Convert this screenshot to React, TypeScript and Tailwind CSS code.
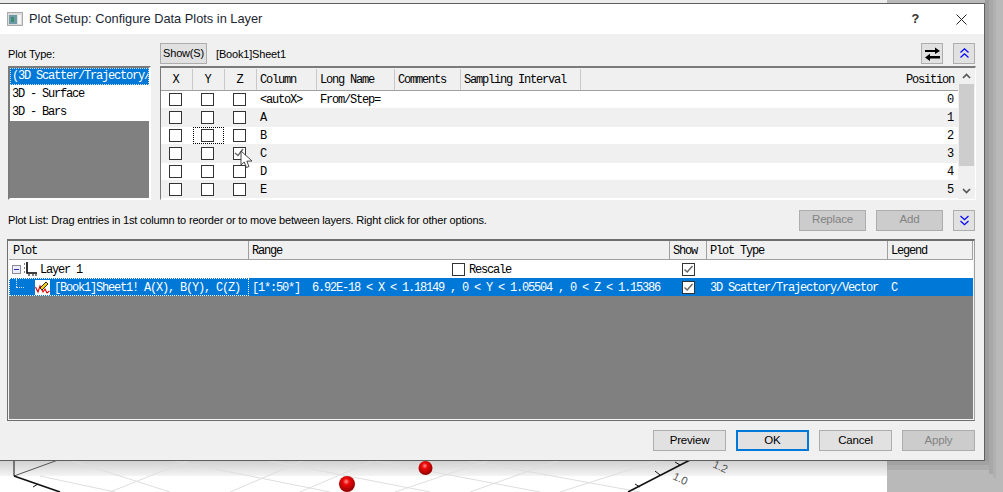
import React from 'react';

const mono = "font-['Liberation_Mono',monospace] text-[12px] tracking-[-1.2px]";

const Check = ({ checked = false }: { checked?: boolean }) => (
  <span className="inline-flex h-[13px] w-[13px] items-center justify-center border border-[#333] bg-white">
    {checked && (
      <svg width="11" height="11" viewBox="0 0 11 11" fill="none" stroke="#666" strokeWidth="1.4">
        <path d="M1.5 5.5 L4.2 8 L9.5 2" />
      </svg>
    )}
  </span>
);

const Chevrons = ({ up }: { up?: boolean }) => (
  <svg width="9" height="11" viewBox="0 0 9 11" fill="none" stroke="#0000ff" strokeWidth="1.2">
    {up ? <path d="M0.5 4.5 L4.5 0.8 L8.5 4.5 M0.5 9.5 L4.5 5.8 L8.5 9.5" /> : <path d="M0.5 1 L4.5 4.7 L8.5 1 M0.5 6 L4.5 9.7 L8.5 6" />}
  </svg>
);

const Btn = ({ children, disabled, primary }: { children: React.ReactNode; disabled?: boolean; primary?: boolean }) => (
  <div
    className={`flex h-[21px] w-[73px] items-center justify-center text-[11.5px] ${
      disabled ? 'border border-[#adadad] bg-[#cccccc] text-[#838383]' : primary ? 'border-2 border-[#0078d7] bg-[#e1e1e1] text-black' : 'border border-[#adadad] bg-[#e1e1e1] text-black'
    }`}
  >
    {children}
  </div>
);

const gridCols = [
  { name: 'X', w: 'w-[32px] justify-center pr-[2px]' },
  { name: 'Y', w: 'w-[32px] justify-center pr-[2px]' },
  { name: 'Z', w: 'w-[32px] justify-center pr-[2px]' },
  { name: 'Column', w: 'w-[60px] pl-[3px]' },
  { name: 'Long Name', w: 'w-[78px] pl-[3px]' },
  { name: 'Comments', w: 'w-[66px] pl-[3px]' },
  { name: 'Sampling Interval', w: 'w-[120px] pl-[3px]' },
];

const gridRows = [
  { col: '<autoX>', long: 'From/Step=', pos: 0, row: 'h-[17px] pt-[1px] bg-white' },
  { col: 'A', long: '', pos: 1, row: 'h-[19px] pt-[2px] bg-[#f0f0f0]' },
  { col: 'B', long: '', pos: 2, row: 'h-[17px] pt-[1px] bg-white' },
  { col: 'C', long: '', pos: 3, row: 'h-[19px] pt-[2px] bg-[#f0f0f0]' },
  { col: 'D', long: '', pos: 4, row: 'h-[17px] pt-[1px] bg-white' },
  { col: 'E', long: '', pos: 5, row: 'h-[18px] pt-[2px] bg-[#f0f0f0]' },
];

const listHead = [
  { name: 'Plot', w: 'w-[240px] pl-[4px]' },
  { name: 'Range', w: 'w-[421px] pl-[3px]' },
  { name: 'Show', w: 'w-[37px] pl-[3px]' },
  { name: 'Plot Type', w: 'w-[181px] pl-[3px]' },
  { name: 'Legend', w: 'w-[85px] pl-[3px]' },
];

const Backdrop = () => (
  <div className="absolute inset-0 overflow-hidden">
    <div className="absolute left-[887px] top-0 h-full w-[116px] bg-[#b9b9b9]" />
    <div className="absolute left-[985px] top-0 h-[470px] w-[4px] bg-[#9c9c9c]" />
    <div className="absolute left-[989px] top-0 h-[474px] w-[4px] bg-[#a8a8a8]" />
    <div className="absolute left-[993px] top-0 h-[478px] w-[3px] bg-[#b0b0b0]" />
    <div className="absolute left-[887px] top-[461px] h-[4px] w-[102px] bg-[#a2a2a2]" />
    <div className="absolute left-[887px] top-[465px] h-[5px] w-[102px] bg-[#adadad]" />
    <div className="absolute left-0 top-0 h-[3px] w-[887px] bg-[#ececec]" />
    <div className="absolute left-0 top-[460px] h-[16px] w-[887px] bg-gradient-to-b from-[#cfcfcf] to-[#f4f4f4]" />
    <svg className="absolute left-0 top-[460px]" width="887" height="32" viewBox="0 0 887 32" fill="none">
      <path d="M40 16 L115 32 M110 32 L190 0 M70 0 L170 32 M230 32 L305 0 M170 0 L330 32 M300 32 L375 0 M265 0 L430 32 M395 32 L490 0 M370 0 L540 32 M470 32 L560 0 M465 0 L640 32 M560 32 L660 0" stroke="#dedede" />
      <path d="M14 0 V16" stroke="#111" />
      <path d="M14 16 L58 0" stroke="#555" />
      <path d="M14 16 L60 32" stroke="#111" strokeWidth="1.6" />
      <path d="M33 27 L38 24" stroke="#111" />
      <path d="M690 0 L628 32" stroke="#111" strokeWidth="1.6" />
      <path d="M680 5 L675 2 M660 15 L655 11 M640 27 L635 24" stroke="#111" />
      <text x="712" y="7" fontSize="11" fill="#555" transform="rotate(25 712 7)" fontFamily="Liberation Sans">1.2</text>
      <text x="672" y="19" fontSize="11" fill="#555" transform="rotate(25 672 19)" fontFamily="Liberation Sans">1.0</text>
      <defs>
        <radialGradient id="ball" cx="45%" cy="35%" r="65%">
          <stop offset="0" stopColor="#ff9a9a" />
          <stop offset="0.3" stopColor="#ee0a0a" />
          <stop offset="1" stopColor="#8e0000" />
        </radialGradient>
      </defs>
      <circle cx="347" cy="24" r="8" fill="url(#ball)" />
      <circle cx="425.5" cy="8" r="7" fill="url(#ball)" />
    </svg>
  </div>
);

export default function App() {
  return (
    <div className="relative h-[492px] w-[1003px] overflow-hidden bg-white font-['Liberation_Sans',sans-serif] text-[11px] tracking-[-0.18px] text-black">
      <Backdrop />
      <div className="relative mt-[3px] flex h-[458px] w-[985px] flex-col border-r border-b border-t border-[#5f5f5f] bg-[#f0f0f0]">
        {/* title bar */}
        <div className="flex h-[30px] items-center bg-white pl-[7px] pr-[17px]">
          <svg width="16" height="14" viewBox="0 0 16 14">
            <rect x="0.5" y="0.5" width="15" height="13" fill="#dcdcdc" stroke="#aaa" />
            <rect x="2" y="3" width="8" height="9" fill="#6f9aa8" />
            <rect x="4" y="5" width="3" height="5" fill="#3f8a6c" />
            <rect x="11" y="3" width="3" height="9" fill="#f5f5f5" />
          </svg>
          <span className="ml-[6px] text-[12.8px] tracking-normal text-[#1b2733]">Plot Setup: Configure Data Plots in Layer</span>
          <span className="ml-auto mr-[37px] font-['Liberation_Mono',monospace] text-[13px] font-bold leading-none text-[#333]">?</span>
          <svg width="11" height="11" viewBox="0 0 11 11" stroke="#222" strokeWidth="1" fill="none">
            <path d="M0.5 0.5 L10.5 10.5 M10.5 0.5 L0.5 10.5" />
          </svg>
        </div>

        {/* upper section */}
        <div className="flex pl-[8px]">
          <div className="flex w-[143px] flex-col">
            <div className="flex h-[32px] items-end pb-[4px]">Plot Type:</div>
            <div className="flex h-[134px] flex-col border-2 border-[#7a7a7a] border-r-white border-b-white bg-[#808080]">
              <div className={`flex h-[17px] items-center overflow-hidden whitespace-nowrap border border-dotted border-[#cde] bg-[#0078d7] pb-[1px] pl-px text-white ${mono}`}>(3D Scatter/Trajectory/</div>
              <div className={`flex h-[18px] items-center bg-white pl-[2px] ${mono}`}>3D - Surface</div>
              <div className={`flex h-[18px] items-center bg-white pl-[2px] ${mono}`}>3D - Bars</div>
            </div>
          </div>

          <div className="ml-[9px] flex w-[816px] flex-col">
            <div className="flex h-[32px] items-start pt-[9px]">
              <div className="flex h-[21px] w-[47px] items-center justify-center border border-[#adadad] bg-[#e1e1e1]">Show(S)</div>
              <span className="ml-[9px] mt-[3px]">[Book1]Sheet1</span>
              <div className="ml-auto flex h-[21px] w-[22px] items-center justify-center border border-[#adadad] bg-[#e1e1e1]">
                <svg width="15" height="14" viewBox="0 0 15 14" fill="#000">
                  <path d="M0 3 H10 V0.5 L15 4 L10 7 V5 H0 Z" />
                  <path d="M15 9 H5 V6.8 L0 10.5 L5 14 V11.5 H15 Z" />
                </svg>
              </div>
              <div className="ml-[10px] mr-px flex h-[21px] w-[22px] items-center justify-center border border-[#adadad] bg-[#e1e1e1]">
                <Chevrons up />
              </div>
            </div>

            <div className="flex h-[134px] border-t-2 border-l border-r border-b border-[#7a7a7a] border-r-white border-b-white">
              <div className="flex flex-1 flex-col bg-white">
                <div className="flex h-[23px] border-b border-[#a0a0a0] bg-[#f0f0f0] pt-[1px]">
                  {gridCols.map((c) => (
                    <div key={c.name} className={`flex items-center border-r border-[#c8c8c8] ${c.w} ${mono}`}>{c.name}</div>
                  ))}
                  <div className={`flex flex-1 items-center justify-end pr-[4px] ${mono}`}>Position</div>
                </div>
                {gridRows.map((r, i) => (
                  <div key={r.col} className={`flex items-start ${r.row} ${mono}`}>
                    {[0, 1, 2].map((k) => (
                      <div key={k} className="relative flex h-[14px] w-[32px] items-center pl-[8px]">
                        <Check />
                        {i === 2 && k === 1 && <div className="absolute bottom-[-2px] left-0 right-[1px] top-[-1px] border border-dotted border-black" />}
                        {i === 3 && k === 2 && (
                          <>
                            <svg className="absolute left-[9px] top-[1px]" width="11" height="11" viewBox="0 0 11 11" fill="none" stroke="#666" strokeWidth="1.4">
                              <path d="M1 6 L4 8.5 L9 2" />
                            </svg>
                            <svg className="absolute left-[15px] top-[4px] z-10" width="13" height="19" viewBox="0 0 13 19">
                              <path d="M1 1 V15 L4.2 12 L6.5 17.5 L9 16.5 L6.8 11.2 L12 11 Z" fill="#fff" stroke="#333" strokeWidth="0.9" />
                            </svg>
                          </>
                        )}
                      </div>
                    ))}
                    <div className="flex h-[15px] w-[60px] items-center pl-[3px] pt-[1px]">{r.col}</div>
                    <div className="flex h-[15px] w-[78px] items-center pl-[3px] pt-[1px]">{r.long}</div>
                    <div className="flex h-[15px] flex-1 items-center justify-end pr-[5px] pt-[1px]">{r.pos}</div>
                  </div>
                ))}
              </div>
              <div className="flex w-[17px] flex-col items-center bg-[#f0f0f0]">
                <div className="flex h-[16px] items-center">
                  <svg width="9" height="6" viewBox="0 0 9 6" fill="none" stroke="#555" strokeWidth="1.7"><path d="M1 5 L4.5 1.5 L8 5" /></svg>
                </div>
                <div className="h-[82px] w-[15px] bg-[#cdcdcd]" />
                <div className="mt-auto flex h-[16px] items-center">
                  <svg width="9" height="6" viewBox="0 0 9 6" fill="none" stroke="#555" strokeWidth="1.7"><path d="M1 1 L4.5 4.5 L8 1" /></svg>
                </div>
              </div>
            </div>
          </div>
        </div>

        {/* plot list bar */}
        <div className="flex h-[39px] items-center pl-[8px] pr-[9px] pt-[1px]">
          <span>Plot List: Drag entries in 1st column to reorder or to move between layers. Right click for other options.</span>
          <div className="ml-auto flex h-[21px] w-[67px] items-center justify-center border border-[#adadad] bg-[#cccccc] text-[11.5px] text-[#838383]">Replace</div>
          <div className="ml-[10px] flex h-[21px] w-[67px] items-center justify-center border border-[#adadad] bg-[#cccccc] text-[11.5px] text-[#838383]">Add</div>
          <div className="ml-[10px] flex h-[21px] w-[22px] items-center justify-center border border-[#adadad] bg-[#e1e1e1]">
            <Chevrons />
          </div>
        </div>

        {/* plot list */}
        <div className="ml-[7px] mr-[9px] flex h-[182px] flex-col border border-t-2 border-[#6e6e6e] border-r-[#a0a0a0]">
          <div className="flex flex-1 flex-col border-x border-b border-[#f4f4f4] bg-[#808080]">
            <div className="flex h-[19px] border-b border-[#a0a0a0] bg-[#f0f0f0]">
              {listHead.map((c) => (
                <div key={c.name} className={`flex items-center border-r border-[#a0a0a0] pt-[2px] ${c.w} ${mono}`}>{c.name}</div>
              ))}
            </div>
            <div className={`flex h-[18px] items-center bg-white ${mono}`}>
              <div className="flex w-[240px] items-center pl-[3px]">
                <span className="flex h-[9px] w-[9px] items-center justify-center border border-[#8a8a9a] bg-[#eef]">
                  <span className="h-px w-[5px] bg-[#2233aa]" />
                </span>
                <svg className="ml-[3px]" width="13" height="14" viewBox="0 0 13 14" fill="none" stroke="#000">
                  <path d="M3 0 V11 H13" strokeWidth="1.6" />
                  <path d="M0 2 H1 M0 6 H1 M0 10 H1 M4 13 H6 M8 13 H10 M11 13 H13" strokeWidth="1" />
                </svg>
                <span className="ml-[3px] pt-[2px]">Layer 1</span>
              </div>
              <div className="flex w-[421px] items-center pl-[203px]">
                <Check />
                <span className="ml-[4px] pt-[2px]">Rescale</span>
              </div>
              <div className="flex w-[37px] justify-center"><Check checked /></div>
            </div>
            <div className={`flex h-[18px] items-center bg-[#0078d7] text-white ${mono}`}>
              <div className="relative flex h-full w-[240px] items-center border border-dotted border-white pl-[6px]">
                <span className="absolute left-[6px] top-0 h-[8px] border-l border-dotted border-[#cde]" />
                <span className="w-[8px] border-t border-dotted border-[#cde]" />
                <svg className="ml-[11px] mr-[4px] bg-white" width="15" height="15" viewBox="0 0 15 15" fill="none">
                  <path d="M0.5 7 L3 12 L5 6 L8 12 L10 9 L12 13 L14.5 11" stroke="#e00000" strokeWidth="1.1" />
                  <path d="M5 8 L11 2 L13 4 L7 10 Z" fill="#f5d020" stroke="#000" strokeWidth="0.8" />
                </svg>
                <span className="pt-[2px]">[Book1]Sheet1! A(X), B(Y), C(Z)</span>
              </div>
              <div className="flex w-[421px] items-center whitespace-pre pl-[3px] pt-[2px]">[1*:50*]  6.92E-18 &lt; X &lt; 1.18149 , 0 &lt; Y &lt; 1.05504 , 0 &lt; Z &lt; 1.15386</div>
              <div className="flex w-[37px] justify-center"><Check checked /></div>
              <div className="w-[181px] pl-[3px] pt-[2px]">3D Scatter/Trajectory/Vector</div>
              <div className="w-[85px] pl-[3px] pt-[2px]">C</div>
            </div>
          </div>
        </div>

        {/* footer buttons */}
        <div className="flex justify-end gap-[10px] pr-[9px] pt-[9px]">
          <Btn>Preview</Btn>
          <Btn primary>OK</Btn>
          <Btn>Cancel</Btn>
          <Btn disabled>Apply</Btn>
        </div>
      </div>
    </div>
  );
}
